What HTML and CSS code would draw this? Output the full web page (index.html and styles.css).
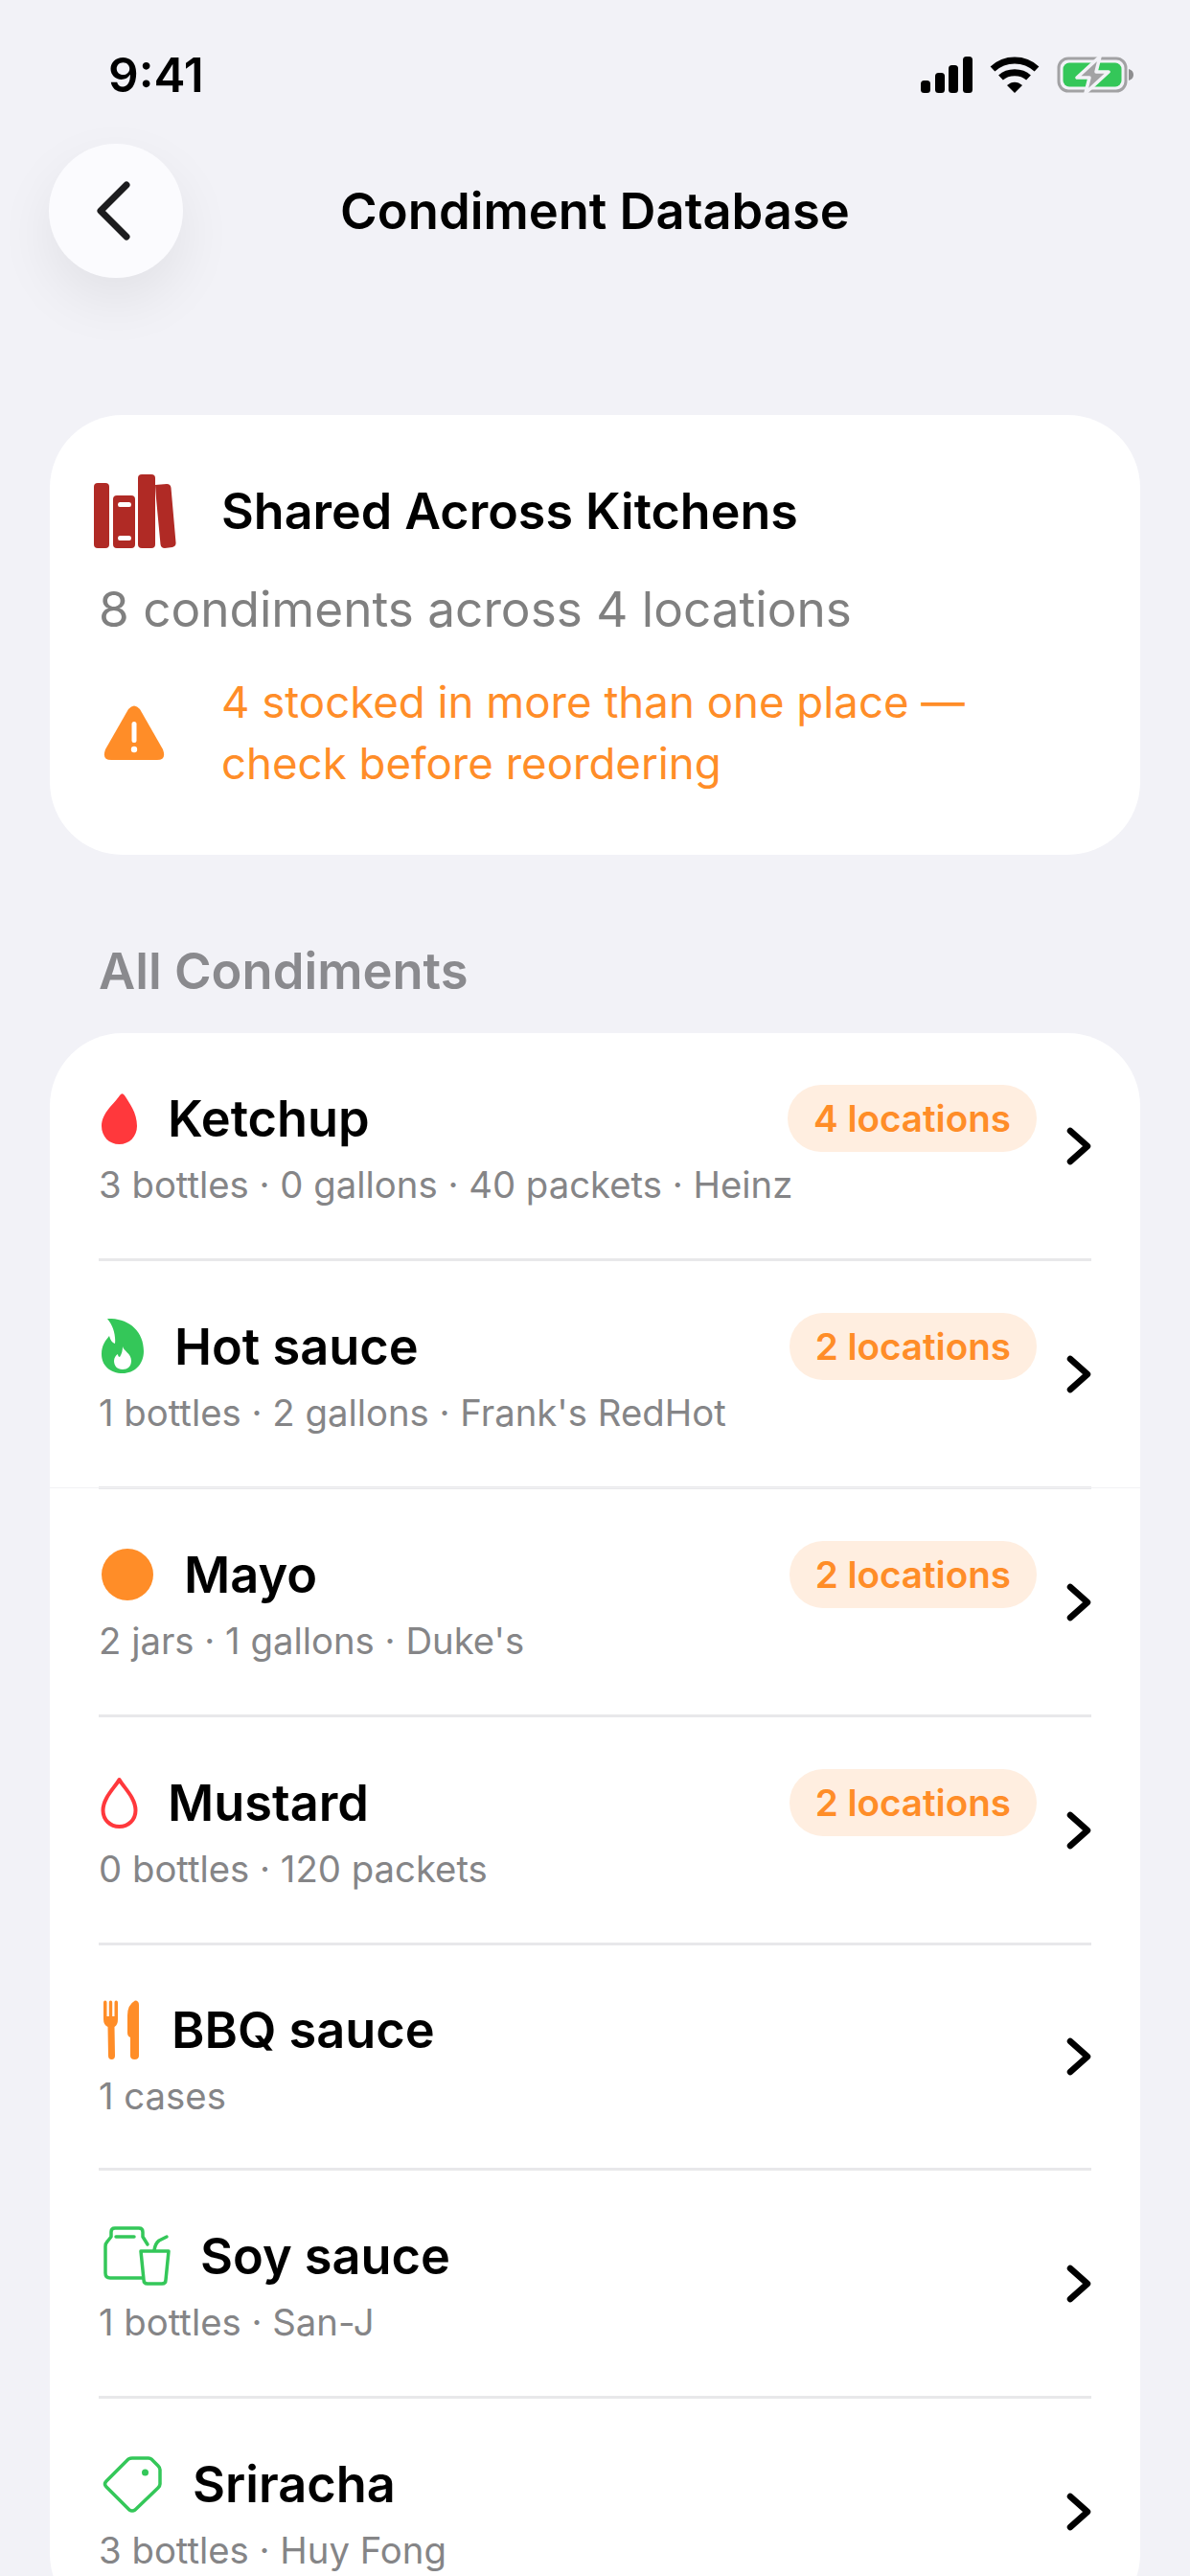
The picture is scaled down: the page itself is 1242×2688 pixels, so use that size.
FILE: index.html
```html
<!DOCTYPE html>
<html lang="en">
<head>
    <meta charset="UTF-8">
    <meta name="viewport" content="width=device-width, initial-scale=1.0">
    <title>Condiment Database</title>
    <link rel="stylesheet" href="styles.css">
</head>
<body>

    <!-- Status bar -->
    <div class="status-bar">
        <span class="status-time">9:41</span>
        <div class="status-icons">
            <svg class="icon-signal" width="54" height="38" viewBox="0 0 54 38" fill="#000">
                <rect x="0" y="25" width="10" height="13" rx="3.5"/>
                <rect x="15" y="17" width="10" height="21" rx="3.5"/>
                <rect x="29" y="9" width="10" height="29" rx="3.5"/>
                <rect x="44" y="0" width="10" height="38" rx="3.5"/>
            </svg>
            <svg class="icon-wifi" width="52" height="40" viewBox="0 0 52 40" fill="none" stroke="#000" stroke-width="7">
                <path d="M3 14 C16 2 36 2 49 14"/>
                <path d="M11.500 23 C19 16 33 16 40.500 23"/>
                <path d="M18 31 L26 39 L34 31 C29 26.500 23 26.500 18 31 Z" fill="#000" stroke="none"/>
            </svg>
            <svg class="icon-battery" width="81" height="40" viewBox="0 0 81 40">
                <rect x="2" y="3" width="70" height="34" rx="10" fill="none" stroke="#a2a2a4" stroke-width="3"/>
                <rect x="6.500" y="7.500" width="61" height="25" rx="6.500" fill="#34c759"/>
                <path d="M75 14 C78.500 15 80 17 80 20 C80 23 78.500 25 75 26 Z" fill="#8e8e90"/>
                <path d="M45 1 L21 23 H34 L30 39 L54 17 H41 Z" fill="#a2a2a4" stroke="#f2f2f7" stroke-width="3.500" stroke-linejoin="round"/>
            </svg>
        </div>
    </div>

    <!-- Navigation -->
    <div class="nav">
        <button class="back-button" type="button" aria-label="Back">
            <svg width="38" height="62" viewBox="0 0 38 62" fill="none" stroke="#1c1c1e" stroke-width="7" stroke-linecap="round" stroke-linejoin="round">
                <path d="M33 4 L6 31 L33 58"/>
            </svg>
        </button>
        <h1 class="nav-title">Condiment Database</h1>
    </div>

    <!-- Summary -->
    <div class="card summary">
        <div class="summary-head">
            <svg class="summary-icon" width="86" height="77" viewBox="0 0 86 77" fill="#b02a25">
                <rect x="0" y="9" width="16" height="68" rx="4"/>
                <path d="M24 22 H39 Q43 22 43 26 V73 Q43 77 39 77 H24 Q20 77 20 73 V26 Q20 22 24 22 Z M27 29 Q25 29 25 31.500 Q25 34 27 34 H37 Q39 34 39 31.500 Q39 29 37 29 Z M27 64 Q25 64 25 66.500 Q25 69 27 69 H37 Q39 69 39 66.500 Q39 64 37 64 Z" fill-rule="evenodd"/>
                <rect x="46" y="0" width="18" height="77" rx="4"/>
                <path d="M64 11 L76 10 Q80 10 80.500 14 L85.500 71 Q86 75 82 76 L74 77 Q70 77 69.500 73 L65 25 Z"/>
            </svg>
            <h2 class="summary-title">Shared Across Kitchens</h2>
        </div>
        <p class="summary-sub">8 condiments across 4 locations</p>
        <div class="summary-warn">
            <svg class="warn-icon" width="64" height="58" viewBox="0 0 64 58">
                <path d="M26 4 Q32 -3 38 4 L62 46 Q66 57 56 57 H8 Q-2 57 2 46 Z" fill="#ff8d28"/>
                <rect x="29.500" y="17" width="5" height="22" rx="2.500" fill="#fff"/>
                <circle cx="32" cy="46" r="3.200" fill="#fff"/>
            </svg>
            <p class="warn-text">4 stocked in more than one place —<br>check before reordering</p>
        </div>
    </div>

    <h3 class="section-title">All Condiments</h3>

    <!-- Condiment list -->
    <div class="card list">

        <div class="row">
            <div class="row-main">
                <div class="row-top">
                    <svg class="row-icon" width="52" height="54" viewBox="0 0 52 54">
                        <path d="M22 3 Q24.500 -0.500 27 3 C32 11 40 21 40 35 C40 46 32 54 21.500 54 C11 54 3 46 3 35 C3 21 17 11 22 3 Z" fill="#ff383c"/>
                    </svg>
                    <span class="row-name">Ketchup</span>
                    <span class="badge">4 locations</span>
                </div>
                <div class="row-meta">3 bottles · 0 gallons · 40 packets · Heinz</div>
            </div>
            <svg class="chevron" width="28" height="40" viewBox="0 0 28 40" fill="none" stroke="#000" stroke-width="6.500" stroke-linecap="round" stroke-linejoin="round">
                <path d="M6 4 L24 20 L6 36"/>
            </svg>
        </div>

        <div class="row row-seam">
            <div class="row-main">
                <div class="row-top">
                    <svg class="row-icon" width="59" height="58" viewBox="0 0 59 58">
                        <path d="M9 0 C30 -1 47 12 47 34 C47 48 37 57 25 57 C12 57 3 49 3 37 C3 28 7 23 11 18 C12 22 14 25 17 26 C18 17 15 7 9 0 Z" fill="#34c759"/>
                        <path d="M25 29 C26 34 34 36 34 44 C34 50 30 53 25 53 C19 53 16 49 16 44 C16 41 18 38 20 37 C20 39 21 40 22 40 C24 37 25 33 25 29 Z" fill="#fff"/>
                    </svg>
                    <span class="row-name">Hot sauce</span>
                    <span class="badge">2 locations</span>
                </div>
                <div class="row-meta">1 bottles · 2 gallons · Frank's RedHot</div>
            </div>
            <svg class="chevron" width="28" height="40" viewBox="0 0 28 40" fill="none" stroke="#000" stroke-width="6.500" stroke-linecap="round" stroke-linejoin="round">
                <path d="M6 4 L24 20 L6 36"/>
            </svg>
        </div>

        <div class="row">
            <div class="row-main">
                <div class="row-top">
                    <svg class="row-icon" width="69" height="56" viewBox="0 0 69 56">
                        <circle cx="30" cy="28" r="27" fill="#ff8d28"/>
                    </svg>
                    <span class="row-name">Mayo</span>
                    <span class="badge">2 locations</span>
                </div>
                <div class="row-meta">2 jars · 1 gallons · Duke's</div>
            </div>
            <svg class="chevron" width="28" height="40" viewBox="0 0 28 40" fill="none" stroke="#000" stroke-width="6.500" stroke-linecap="round" stroke-linejoin="round">
                <path d="M6 4 L24 20 L6 36"/>
            </svg>
        </div>

        <div class="row">
            <div class="row-main">
                <div class="row-top">
                    <svg class="row-icon" width="52" height="54" viewBox="0 0 52 54">
                        <path d="M21.500 3 C26 11 38.500 22 38.500 35 C38.500 45 31 52 21.500 52 C12 52 4.500 45 4.500 35 C4.500 22 17 11 21.500 3 Z" fill="none" stroke="#ff383c" stroke-width="4" stroke-linejoin="round"/>
                    </svg>
                    <span class="row-name">Mustard</span>
                    <span class="badge">2 locations</span>
                </div>
                <div class="row-meta">0 bottles · 120 packets</div>
            </div>
            <svg class="chevron" width="28" height="40" viewBox="0 0 28 40" fill="none" stroke="#000" stroke-width="6.500" stroke-linecap="round" stroke-linejoin="round">
                <path d="M6 4 L24 20 L6 36"/>
            </svg>
        </div>

        <div class="row row-short">
            <div class="row-main">
                <div class="row-top">
                    <svg class="row-icon" width="56" height="62" viewBox="0 0 56 62" fill="#ff8d28">
                        <path d="M5 2.500 Q5 0.500 6.800 0.500 Q8.500 0.500 8.500 2.500 V17 H10.800 V2.500 Q10.800 0.500 12.500 0.500 Q14.200 0.500 14.200 2.500 V17 H16.500 V2.500 Q16.500 0.500 18.200 0.500 Q20 0.500 20 2.500 V20 Q20 26 16.500 28 L17 58 Q17 62 13.500 62 Q10 62 10 58 L9.500 28 Q5 26 5 20 Z"/>
                        <path d="M38 0.500 Q42 0.500 42 5 V58 Q42 62 37.500 62 Q33 62 33 58 V39 Q30 38 30 34 V16 Q30 5 38 0.500 Z"/>
                    </svg>
                    <span class="row-name">BBQ sauce</span>
                </div>
                <div class="row-meta">1 cases</div>
            </div>
            <svg class="chevron" width="28" height="40" viewBox="0 0 28 40" fill="none" stroke="#000" stroke-width="6.500" stroke-linecap="round" stroke-linejoin="round">
                <path d="M6 4 L24 20 L6 36"/>
            </svg>
        </div>

        <div class="row">
            <div class="row-main">
                <div class="row-top">
                    <svg class="row-icon" width="86" height="62" viewBox="0 0 86 62" fill="none" stroke="#34c759" stroke-width="3.500" stroke-linecap="round" stroke-linejoin="round">
                        <path d="M46 54 H12 Q7 54 7 49 V21 Q7 18 9 16 L13 11 V6 Q13 2 17 2 H42 Q46 2 46 6 V11 L51 19"/>
                        <path d="M18 11 H37"/>
                        <path d="M44 26 H73 L70 56 Q70 60 66 60 H51 Q47 60 47 56 Z"/>
                        <path d="M58 25 Q59 18 63 15 L71 11"/>
                    </svg>
                    <span class="row-name">Soy sauce</span>
                </div>
                <div class="row-meta">1 bottles · San-J</div>
            </div>
            <svg class="chevron" width="28" height="40" viewBox="0 0 28 40" fill="none" stroke="#000" stroke-width="6.500" stroke-linecap="round" stroke-linejoin="round">
                <path d="M6 4 L24 20 L6 36"/>
            </svg>
        </div>

        <div class="row">
            <div class="row-main">
                <div class="row-top">
                    <svg class="row-icon" width="78" height="60" viewBox="0 0 78 60" fill="none" stroke="#34c759" stroke-width="3.500" stroke-linejoin="round">
                        <path d="M35 3 H52 Q54 3 55 4 L62 11 Q64 13 64 15 V30 Q64 32 62 34 L38 57 Q35 59 32 57 L8 33 Q5 30 8 27 L31 4 Q33 3 35 3 Z"/>
                        <circle cx="48.500" cy="18" r="3.500" fill="#34c759" stroke="none"/>
                    </svg>
                    <span class="row-name">Sriracha</span>
                </div>
                <div class="row-meta">3 bottles · Huy Fong</div>
            </div>
            <svg class="chevron" width="28" height="40" viewBox="0 0 28 40" fill="none" stroke="#000" stroke-width="6.500" stroke-linecap="round" stroke-linejoin="round">
                <path d="M6 4 L24 20 L6 36"/>
            </svg>
        </div>

    </div>

</body>
</html>
```

FILE: styles.css
```css
* {
    box-sizing: border-box;
}
html, body {
    margin: 0;
    padding: 0;
}
body {
    width: 1242px;
    height: 2688px;
    overflow: hidden;
    background-color: #f2f2f7;
    font-family: Inter, "Liberation Sans", sans-serif;
    color: #000;
}
h1, h2, h3, p {
    margin: 0;
}

/* Status bar */
.status-bar {
    display: flex;
    justify-content: space-between;
    align-items: center;
    height: 40px;
    margin-top: 58px;
    padding: 0 58px 0 113px;
}
.status-time {
    font-size: 49.5px;
    font-weight: 600;
    line-height: 40px;
}
.status-icons {
    display: flex;
    align-items: center;
    gap: 18px;
}

/* Navigation */
.nav {
    display: grid;
    grid-template-columns: 140px 1fr 140px;
    align-items: center;
    margin-top: 52px;
    padding: 0 51px;
}
.back-button {
    display: flex;
    align-items: center;
    justify-content: center;
    width: 140px;
    height: 140px;
    padding: 0 6px 0 0;
    border: 0;
    border-radius: 50%;
    background-color: #fbfbfe;
    box-shadow: 0 24px 60px rgba(0, 0, 0, 0.07);
}
.nav-title {
    font-size: 52.5px;
    font-weight: 600;
    text-align: center;
}

/* Cards */
.card {
    margin: 0 52px;
    background-color: #fff;
    border-radius: 76px;
}
.summary {
    margin-top: 143px;
    height: 459px;
    padding: 62px 51px 0;
}
.summary-head {
    display: flex;
    align-items: center;
    gap: 47px;
    margin-left: -5px;
}
.summary-title {
    font-size: 52px;
    font-weight: 600;
}
.summary-sub {
    margin-top: 32px;
    font-size: 51.3px;
    color: #808080;
}
.summary-warn {
    display: flex;
    align-items: center;
    gap: 59px;
    margin-top: 35px;
    padding-left: 5px;
}
.warn-text {
    font-size: 45.6px;
    line-height: 64px;
    color: #ff8d28;
}
.section-title {
    margin: 89px 0 0 103px;
    font-size: 52.5px;
    font-weight: 600;
    color: #8a8a8e;
}

/* Condiment rows */
.list {
    margin-top: 33px;
    padding: 0 51px;
}
.row {
    display: flex;
    align-items: center;
    height: 238px;
    border-bottom: 3px solid #e8e8ea;
}
.row-short {
    height: 235px;
}
/* faint hairline that runs out to the card edges below this row */
.row-seam {
    position: relative;
}
.row-seam::after {
    content: "";
    position: absolute;
    left: -51px;
    right: -51px;
    bottom: -2px;
    height: 1px;
    background-color: #f2f2f5;
}
.row-main {
    flex: 1;
    min-width: 0;
}
.row-top {
    display: flex;
    align-items: center;
    gap: 20px;
    height: 70px;
}
.row-icon {
    flex-shrink: 0;
}
.row-name {
    font-size: 52.3px;
    font-weight: 600;
}
.badge {
    height: 70px;
    margin-left: auto;
    padding: 0 27px;
    border-radius: 35px;
    background-color: #ffeee0;
    color: #ff8d28;
    font-size: 38.6px;
    font-weight: 600;
    line-height: 70px;
}
.row-meta {
    margin-top: 11px;
    font-size: 38.3px;
    color: #858587;
}
.chevron {
    flex-shrink: 0;
    margin-left: 29px;
}
```
